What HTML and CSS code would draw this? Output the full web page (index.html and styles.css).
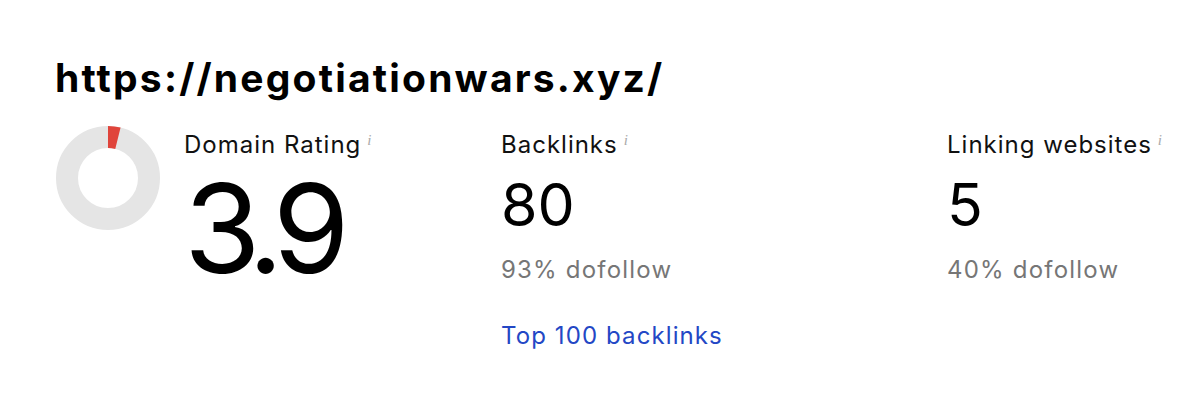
FILE: index.html
```html
<!DOCTYPE html>
<html lang="en">
    <head>
        <meta charset="UTF-8">
        <title>Overview</title>
        <link rel="stylesheet" href="styles.css">
    </head>
    <body>
        <div class="card">
            <h1 class="url">https://negotiationwars.xyz/</h1>
            <div class="stats">
                <svg class="donut" width="106" height="106" viewBox="0 0 106 106">
                    <circle cx="53" cy="53" r="41" fill="none" stroke="#e5e5e5" stroke-width="22"/>
                    <circle cx="53" cy="53" r="41" fill="none" stroke="#e0443b" stroke-width="22"
                        stroke-dasharray="10.05 300" transform="rotate(-90 53 53)"/>
                </svg>
                <div class="stat">
                    <div class="label">Domain Rating<span class="info">i</span></div>
                    <div class="value big">3.9</div>
                </div>
                <div class="stat">
                    <div class="label">Backlinks<span class="info">i</span></div>
                    <div class="value">80</div>
                    <div class="sub">93% dofollow</div>
                    <a class="link" href="#">Top 100 backlinks</a>
                </div>
                <div class="stat">
                    <div class="label">Linking websites<span class="info">i</span></div>
                    <div class="value">5</div>
                    <div class="sub">40% dofollow</div>
                </div>
            </div>
        </div>
    </body>
</html>
```

FILE: styles.css
```css
body {
    margin: 0;
    background-color: #ffffff;
    color: #000000;
    font-family: 'Inter', 'Liberation Sans', sans-serif;
}

.card {
    padding: 53px 0 0 55px;
}

.url {
    margin: 0;
    font-size: 39px;
    font-weight: 700;
    line-height: 50px;
    letter-spacing: 2.2px;
}

.stats {
    display: grid;
    grid-template-columns: 129px 317px 446px auto;
    margin-top: 22px;
}

.label {
    font-size: 24px;
    line-height: 30px;
    letter-spacing: 1px;
    color: #111111;
}

.info {
    font-family: 'Liberation Serif', serif;
    font-style: italic;
    font-size: 15px;
    color: #aaaaaa;
    vertical-align: 8px;
    margin-left: 6px;
}

.value {
    font-size: 59px;
    line-height: 90px;
}

.value.big {
    font-size: 124px;
    line-height: 136px;
    letter-spacing: -10px;
}

.sub {
    font-size: 24px;
    line-height: 40px;
    letter-spacing: 1.2px;
    color: #767676;
}

.link {
    display: block;
    margin-top: 31px;
    font-size: 24px;
    line-height: 30px;
    letter-spacing: 1.1px;
    color: #2347c5;
    text-decoration: none;
}
```
